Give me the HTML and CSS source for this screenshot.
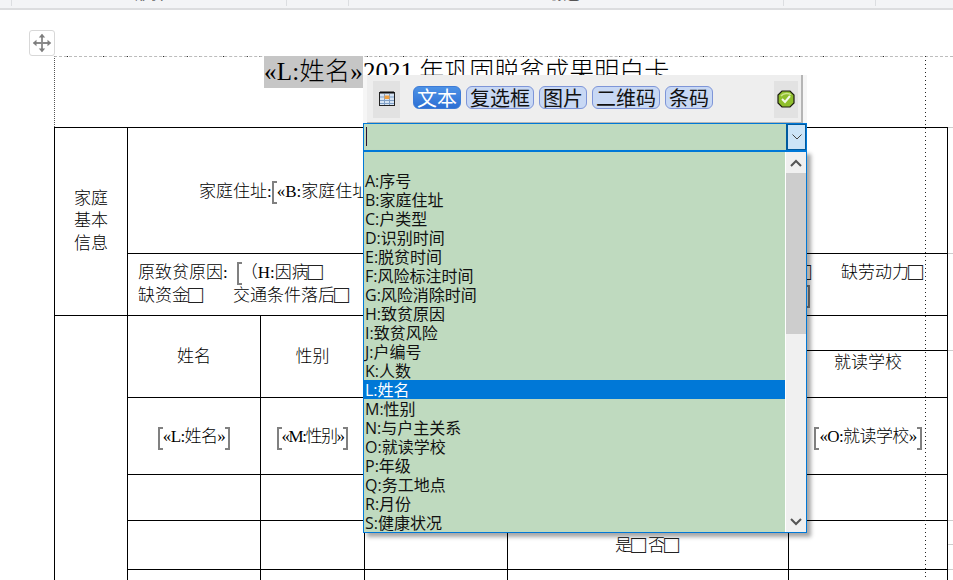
FILE: index.html
```html
<!DOCTYPE html>
<html lang="zh-CN">
<head>
<meta charset="utf-8">
<title>模板编辑</title>
<link rel="stylesheet" href="styles.css">
</head>
<body>
<header class="ribbon">
  <div class="rib rib-a"></div>
  <div class="rib rib-b"><span>形状</span></div>
  <div class="rib rib-c"></div>
  <div class="rib rib-d"><span>颜色</span></div>
  <div class="rib rib-e"></div>
  <div class="rib rib-f"></div>
</header>

<main class="page">
  <div class="move-handle">
    <svg viewBox="0 0 24 24" width="22" height="22"><path d="M12 3v18M3 12h18" stroke="#8a8a8a" stroke-width="2" fill="none"/><path d="M12 2l3.500 4h-7zM12 22l3.500-4h-7zM2 12l4-3.500v7zM22 12l-4-3.500v7z" fill="#7d7d7d"/></svg>
  </div>
  <div class="sheet">
    <div class="title-band">
      <h1 class="title"><span class="field-sel">«L:姓名»</span>2021 年巩固脱贫成果明白卡</h1>
    </div>
    <table class="form">
      <colgroup><col class="c1"><col class="c2"><col class="c3"><col class="c4"><col class="c5"><col class="c6"></colgroup>
      <tr class="r1">
        <td rowspan="2" class="center basic">家庭<br>基本<br>信息</td>
        <td colspan="5" class="addr"><span class="addr-text">家庭住址:<i class="bl"></i>«B:家庭住址»<i class="br"></i></span></td>
      </tr>
      <tr class="r2">
        <td colspan="5" class="reasons">
          <div class="line"><span>原致贫原因:<i class="bl tall"></i>（H:因病<span class="cb">□</span></span><span class="right-a"><span class="cb tail">□</span>缺劳动力<span class="cb">□</span></span></div>
          <div class="line"><span>缺资金<span class="cb">□</span><span class="gap">交通条件落后<span class="cb">□</span></span></span><span class="right-b"><i class="br"></i></span></div>
        </td>
      </tr>
      <tr class="r3">
        <td rowspan="6" class="center"></td>
        <td rowspan="2" class="center hd">姓名</td>
        <td rowspan="2" class="center hd">性别</td>
        <td rowspan="2" class="center hd">与户主关系</td>
        <td rowspan="2" class="center hd">健康状况</td>
        <td class="blank"></td>
      </tr>
      <tr class="r4"><td class="center school">就读学校</td></tr>
      <tr class="r5">
        <td class="center fld"><i class="bl"></i>«L:姓名»<i class="br"></i></td>
        <td class="center fld fld-m"><i class="bl"></i>«M:性别»<i class="br"></i></td>
        <td class="center fld"><i class="bl"></i>«N»<i class="br"></i></td>
        <td class="center fld"><i class="bl"></i>«S»<i class="br"></i></td>
        <td class="center fld"><i class="bl"></i>«O:就读学校»<i class="br"></i></td>
      </tr>
      <tr class="r6"><td></td><td></td><td></td><td></td><td></td></tr>
      <tr class="r7"><td></td><td></td><td></td><td class="center yesno">是<span class="cb">□</span>否<span class="cb">□</span></td><td></td></tr>
      <tr class="r8"><td></td><td></td><td></td><td></td><td></td></tr>
    </table>
    <div class="guide"></div>
    <div class="ticks"></div>
  </div>

  <section class="popup">
    <div class="toolbar">
      <div class="tool-box">
        <svg viewBox="0 0 16 16" width="16" height="16"><rect x=".5" y="1.500" width="15" height="13" fill="#d6e4f4" stroke="#222"/><path d="M1 1.500h14" stroke="#111" stroke-width="2"/><path d="M1 6h14M1 9.500h14M1 12.500h14M5.500 3v11M10.500 3v11" stroke="#7f9fc6"/><rect x="5.500" y="4.500" width="5" height="3.500" fill="#f0a040"/></svg>
      </div>
      <div class="tabs">
        <button class="tab active">文本</button>
        <button class="tab">复选框</button>
        <button class="tab">图片</button>
        <button class="tab">二维码</button>
        <button class="tab">条码</button>
      </div>
      <div class="tool-box ok">
        <svg viewBox="0 0 18 18" width="18" height="18"><path d="M5 1h8l4 4v8l-4 4H5l-4-4V5z" fill="#8fbf2c" stroke="#1c1c10" stroke-width="1.200"/><path d="M4 6c2-3 8-3.500 10-1" stroke="#cde58a" stroke-width="1.500" fill="none"/><path d="M5 9l3 3 5-6" stroke="#f4f8ea" stroke-width="2" fill="none"/></svg>
      </div>
    </div>
    <div class="combo">
      <div class="combo-input"><i class="caret"></i></div>
      <div class="combo-btn"><svg viewBox="0 0 10 6" width="10" height="6"><path d="M.5.500L5 5 9.500.500" stroke="#444" fill="none"/></svg></div>
    </div>
    <div class="list-wrap">
      <ul class="list">
        <li></li>
        <li>A:序号</li>
        <li>B:家庭住址</li>
        <li>C:户类型</li>
        <li>D:识别时间</li>
        <li>E:脱贫时间</li>
        <li>F:风险标注时间</li>
        <li>G:风险消除时间</li>
        <li>H:致贫原因</li>
        <li>I:致贫风险</li>
        <li>J:户编号</li>
        <li>K:人数</li>
        <li class="sel">L:姓名</li>
        <li>M:性别</li>
        <li>N:与户主关系</li>
        <li>O:就读学校</li>
        <li>P:年级</li>
        <li>Q:务工地点</li>
        <li>R:月份</li>
        <li>S:健康状况</li>
      </ul>
      <div class="scrollbar">
        <div class="sb-btn"><svg viewBox="0 0 12 8" width="12" height="8"><path d="M1 7l5-5 5 5" stroke="#555" stroke-width="2" fill="none"/></svg></div>
        <div class="sb-track"><div class="sb-thumb"></div></div>
        <div class="sb-btn"><svg viewBox="0 0 12 8" width="12" height="8"><path d="M1 1l5 5 5-5" stroke="#555" stroke-width="2" fill="none"/></svg></div>
      </div>
    </div>
  </section>
</main>
</body>
</html>
```
FILE: styles.css
```css
* { box-sizing: border-box; }
html, body { margin: 0; height: 100%; overflow: hidden; background: #fff; }
body { font-family: "Liberation Serif", "Noto Sans CJK SC", serif; color: #000; width: 953px; height: 580px; }

.ribbon { display: flex; height: 10px; background: #f3f4f6; border-bottom: 2px solid #dcdddf; overflow: hidden; font-family: "Noto Sans CJK SC", sans-serif; font-size: 14px; color: #555; }
.rib { display: flex; justify-content: center; align-items: flex-end; height: 6px; border-right: 1px solid #dcdee1; flex: none; }
.rib span { line-height: 20px; margin-bottom: 3px; white-space: nowrap; }
.rib-a { width: 12px; }
.rib-b { width: 275px; }
.rib-c { width: 62px; }
.rib-d { width: 435px; }
.rib-e { width: 92px; }
.rib-f { width: 77px; border-right: 0; }

.page { position: relative; height: 570px; padding: 46px 0 0 54px; overflow: hidden; }
.move-handle { position: absolute; left: 29px; top: 20px; width: 26px; height: 26px; background: #fff; border: 1px solid #d8d8d8; border-radius: 3px; display: flex; align-items: center; justify-content: center; }

.sheet { position: relative; width: 899px; }
.title-band { height: 71px; border-top: 1px dashed #bdbdbd; border-left: 1px dotted #555; background: repeating-linear-gradient(90deg, #222 0 1px, transparent 1px 12px) no-repeat 0 -1px / 860px 1px; }
.title { margin: -1px 0 0 209px; font-size: 25px; font-weight: 300; line-height: 32px; white-space: nowrap; color: #000; }
.field-sel { background: #c6c6c6; display: inline-block; letter-spacing: .3px; }

.form { border-collapse: collapse; table-layout: fixed; width: 893px; font-size: 17px; font-weight: 300; }
.form td { border: 1.500px solid #000; padding: 0; vertical-align: middle; }
.c1 { width: 73px; } .c2 { width: 133px; } .c3 { width: 104px; } .c4 { width: 143px; } .c5 { width: 281px; } .c6 { width: 159px; }
.r1 { height: 126px; } .r2 { height: 62px; } .r3 { height: 35px; } .r4 { height: 47px; } .r5 { height: 77px; } .r6 { height: 46px; } .r7 { height: 49px; } .r8 { height: 30px; }
.center { text-align: center; }
.basic { line-height: 22.500px; }
.addr { padding-left: 71px !important; }
.addr-text { white-space: nowrap; }
.reasons { padding: 8px 22px 7px 10px !important; }
.line { display: flex; justify-content: space-between; white-space: nowrap; height: 23px; line-height: 22px; }
.cb { display: inline-block; width: 16px; font-family: "DejaVu Sans", sans-serif; font-size: 25px; line-height: 0; text-align: left; text-indent: -1px; vertical-align: -2px; white-space: nowrap; color: #222; }
.gap { margin-left: 28px; }
.tail { margin-right: 28px; }
.right-b { margin-right: 115px; }
.form .hd { padding-bottom: 4px; }
.form .yesno { padding-bottom: 3px; }
.school { vertical-align: top !important; line-height: 23px; }
.fld { letter-spacing: -.6px; }
.fld-m { letter-spacing: -1.500px; }
.bl, .br { display: inline-block; width: 5px; height: 23px; vertical-align: middle; border: 2px solid #808080; }
.bl { border-right: 0; }
.br { border-left: 0; }
.tall { margin: 0 -1px 0 9px; vertical-align: top; }
.right-b .br { vertical-align: top; }

.guide { position: absolute; left: 871px; top: 0; height: 530px; width: 1px; background: repeating-linear-gradient(180deg, #222 0 1px, transparent 1px 4px); }
.ticks { position: absolute; left: 894px; top: 0; width: 5px; height: 530px; background:
  linear-gradient(#ccc, #ccc) no-repeat 0 71px / 5px 1px,
  linear-gradient(#ccc, #ccc) no-repeat 0 197px / 5px 1px,
  linear-gradient(#ccc, #ccc) no-repeat 0 294px / 5px 1px,
  linear-gradient(#ccc, #ccc) no-repeat 0 464px / 5px 1px,
  linear-gradient(#ccc, #ccc) no-repeat 0 488px / 5px 1px,
  linear-gradient(#ccc, #ccc) no-repeat 0 513px / 5px 1px; }

.popup { position: absolute; left: 363px; top: 65px; width: 444px; font-family: "Open Sans", "Noto Sans CJK SC", sans-serif; color: #111; }
.toolbar { display: flex; align-items: center; height: 48px; width: 444px; padding: 0 5px 0 6px; background: #eeeeee; border-right: 4px solid #f6f6f6; border-left: 4px solid #f6f6f6; box-shadow: inset -2px -1px 0 #b5b5b5; }
.tool-box { width: 27px; height: 37px; background: #e2e2e2; display: flex; align-items: center; justify-content: center; flex: none; }
.tabs { display: flex; gap: 5px; margin: 0 0 4px 13px; flex: 1; }
.tab { height: 23px; padding: 0; width: 48px; border: 1px solid #7e95d8; border-radius: 6px; background: #c8d8f4; font-family: "Noto Sans CJK SC", sans-serif; font-size: 20px; line-height: 21px; font-weight: 400; color: #111; white-space: nowrap; }
.tab:nth-child(2), .tab:nth-child(4) { width: 68px; }
.tab.active { background: linear-gradient(#4d92e6, #2c6fd4); color: #fff; border-color: #3d7bd6; }
.tool-box.ok { width: 24px; }

.combo { display: flex; height: 28px; border: 1px solid #0078d7; background: #bfdabf; }
.combo-input { flex: 1; position: relative; }
.caret { position: absolute; left: 2px; top: 3px; width: 1px; height: 19px; background: #2a1030; }
.combo-btn { width: 20px; background: #cce4f7; border-left: 1px solid #005a9e; display: flex; align-items: center; justify-content: center; box-shadow: inset 0 0 0 1px #005a9e; }

.list-wrap { display: flex; height: 383px; border: 1px solid #0078d7; border-top: 2px solid #0078d7; background: #bfdabf; box-shadow: 4px 4px 4px rgba(0, 0, 0, .35); margin-top: -1px; }
.list { list-style: none; margin: 0; padding: 0; flex: 1; overflow: hidden; }
.list li { height: 19px; line-height: 21px; font-size: 16px; padding-left: 1px; white-space: nowrap; }
.list li.sel { background: #0078d7; color: #fff; }
.scrollbar { width: 21px; background: #f0f0f0; border-left: 1px solid #fff; display: flex; flex-direction: column; }
.sb-btn { height: 21px; display: flex; align-items: center; justify-content: center; flex: none; }
.sb-track { flex: 1; }
.sb-thumb { height: 161px; background: #cdcdcd; }
```
